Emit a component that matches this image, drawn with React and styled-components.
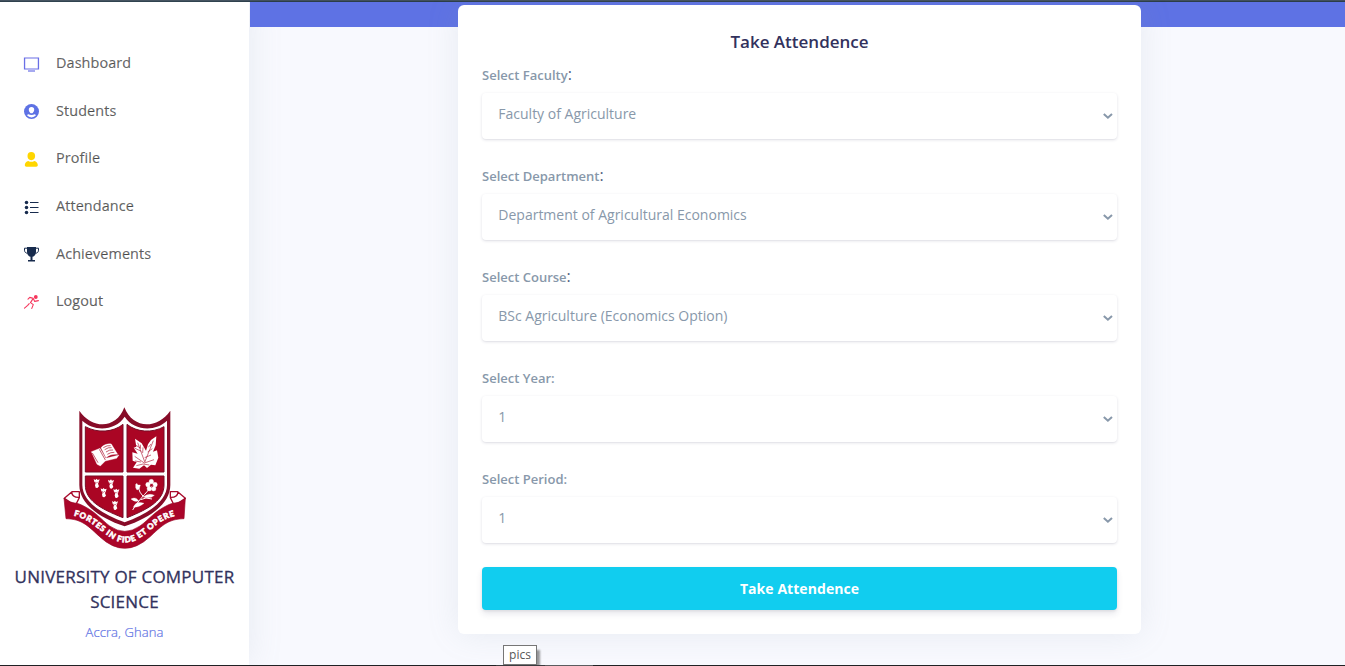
import React from "react";
import styled, { createGlobalStyle } from "styled-components";

const GlobalStyle = createGlobalStyle`
  * { box-sizing: border-box; }
  body {
    margin: 0;
    overflow: hidden;
    background: #f8f9fe;
    font-family: "Open Sans", "Liberation Sans", sans-serif;
    color: #525f7f;
  }
`;

const Page = styled.div`
  display: flex;
  flex-direction: column;
  height: 666px;
  overflow: hidden;
`;
const TopEdge = styled.div`
  flex: none;
  height: 2px;
  background: linear-gradient(#42505d 50%, #2b3d49 50%);
`;
const BottomEdge = styled.div`
  flex: none;
  height: 1px;
  position: relative;
  z-index: 3;
  background: linear-gradient(90deg, #202124 0 496px, #3a3b3e 496px 545px, #5b5c5f 545px 593px, #202124 593px);
`;
const Body = styled.div`
  flex: 1;
  min-height: 0;
  display: flex;
`;

const Sidebar = styled.aside`
  flex: none;
  width: 249px;
  background: #fff;
  box-shadow: 0 0 32px 0 rgba(136, 152, 170, 0.15);
  display: flex;
  flex-direction: column;
  align-items: center;
`;
const Nav = styled.nav`
  width: 100%;
  padding-top: 37px;
`;
const NavItem = styled.a`
  display: flex;
  align-items: center;
  height: 47.6px;
  padding-left: 23px;
  font-size: 14.4px;
  font-weight: 400;
  letter-spacing: 0.1px;
  -webkit-text-stroke: 0.2px rgba(0, 0, 0, 0.6);
  color: rgba(0, 0, 0, 0.6);
  svg { flex: none; margin: 3px 16px 0 0; }
`;
const Brand = styled.div`
  display: flex;
  flex-direction: column;
  align-items: center;
  margin-top: 70.4px;
  svg { display: block; margin-left: 1px; }
`;
const School = styled.h3`
  margin: 4px 0 0;
  width: 240px;
  text-align: center;
  font-size: 17px;
  line-height: 25px;
  font-weight: 400;
  letter-spacing: 0.22px;
  -webkit-text-stroke: 0.3px #32325d;
  color: #32325d;
`;
const Place = styled.div`
  margin-top: 8px;
  font-size: 13px;
  line-height: 20px;
  font-weight: 300;
  letter-spacing: 0.1px;
  -webkit-text-stroke: 0.2px #5e72e4;
  color: #5e72e4;
`;

const Main = styled.main`
  flex: 1;
  min-width: 0;
  margin-left: 1px;
  display: flex;
  flex-direction: column;
`;
const Band = styled.div`
  flex: none;
  height: 25px;
  background: #5e72e4;
`;
const Card = styled.form`
  flex: none;
  width: 683px;
  height: 629px;
  margin: -22px 0 0 208px;
  padding: 24px;
  border-radius: 6px;
  background: #fff;
  box-shadow: 0 0 32px 0 rgba(136, 152, 170, 0.15);
  position: relative;
`;
const Title = styled.h2`
  margin: 0;
  text-align: center;
  font-size: 17px;
  line-height: 26px;
  font-weight: 600;
  color: #32325d;
`;
const Field = styled.div`
  height: 101px;
  padding-top: 7px;
`;
const Label = styled.label`
  display: block;
  height: 24px;
  padding-top: ${(p) => (p.$large ? 0 : 1)}px;
  font-size: 13px;
  line-height: 24px;
  font-weight: 600;
  color: #8898aa;
`;
const Colon = styled.span`
  font-size: ${(p) => (p.$large ? "16px" : "13px")};
  font-weight: ${(p) => (p.$large ? 400 : 600)};
  color: ${(p) => (p.$large ? "#525f7f" : "#8898aa")};
`;
const Select = styled.div`
  display: flex;
  align-items: center;
  justify-content: space-between;
  height: 46px;
  margin-top: 7px;
  padding: 0 4px 6px 16.3px;
  border-radius: 4px;
  background: #fff;
  box-shadow: 0 1px 3px rgba(50, 50, 93, 0.15), 0 1px 0 rgba(0, 0, 0, 0.02);
  font-size: 14px;
  color: #8898aa;
  svg { margin-top: 6px; }
`;
const Submit = styled.button`
  display: block;
  width: 100%;
  height: 43px;
  margin-top: 7px;
  border: 0;
  border-radius: 4px;
  background: #11cdef;
  box-shadow: 0 4px 6px rgba(50, 50, 93, 0.11), 0 1px 3px rgba(0, 0, 0, 0.08);
  font: 700 14px "Open Sans", sans-serif;
  letter-spacing: 0.06px;
  color: #fff;
`;
const Tooltip = styled.div`
  position: absolute;
  z-index: 2;
  left: 503px;
  top: 645px;
  width: 34px;
  height: 20px;
  border: 1px solid #767676;
  background: #fff;
  box-shadow: 3px 5px 2px rgba(0, 0, 0, 0.4);
  font-size: 12px;
  line-height: 18px;
  text-align: center;
  color: #575757;
`;

const Icon = ({ children, color }) => (
  <svg width="17" height="17" viewBox="0 0 17 17" fill={color} stroke="none">
    {children}
  </svg>
);
const icons = {
  tv: (
    <Icon color="#6a6fe6">
      <path fillRule="evenodd" d="M.9 1.400h15.200v12.200H.9zM2.200 2.600v9.800h12.600V2.600z" />
      <path d="M5 14.400h7v1.200H5z" />
    </Icon>
  ),
  circle: (
    <Icon color="#5e72e4">
      <circle cx="8.5" cy="8.5" r="7.5" />
      <path fill="#fff" d="M8.5 4a2.7 2.7 0 0 1 2.7 2.8c0 1.2-.5 2.1-1.2 2.7v1c1.4.4 2.6 1 3 1.8a5.8 5.8 0 0 1-9 0c.4-.8 1.6-1.4 3-1.8v-1c-.7-.6-1.2-1.5-1.2-2.7A2.7 2.7 0 0 1 8.5 4z" />
      <path d="M5 10.300 7 9.800q1.500 1 3 0l2 .5-.3 1q-3.200 1.300-6.400 0z" />
    </Icon>
  ),
  person: (
    <Icon color="#ffd600">
      <ellipse cx="8.3" cy="5.1" rx="3.8" ry="4.1" />
      <path d="M5.300 9.900q3 1.700 6 0c2.100.3 3.500 2 3.500 4.200 0 1-.6 1.700-1.600 1.700H3.400c-1 0-1.600-.7-1.600-1.700 0-2.200 1.400-3.900 3.500-4.200z" />
    </Icon>
  ),
  list: (
    <Icon color="#172b4d">
      <circle cx="3.5" cy="3.4" r="1.75" />
      <circle cx="3.5" cy="8.4" r="1.75" />
      <circle cx="3.5" cy="13.4" r="1.75" />
      <path d="M7 2.9h8.500v1H7zM7 7.900h8.500v1H7zM7 12.900h8.500v1H7z" />
    </Icon>
  ),
  trophy: (
    <Icon color="#172b4d">
      <path d="M4 1h9v4.8c0 2.8-1.500 4.400-3.500 5V14H12v1.500H5V14h2.500v-3.200C5.500 10.200 4 8.600 4 5.800z" />
      <path fill="none" stroke="#172b4d" d="M4 2.200H1.500v2c0 1.800 1.200 2.900 3 3.100M13 2.200h2.500v2c0 1.800-1.200 2.900-3 3.100" />
    </Icon>
  ),
  run: (
    <Icon color="#f5365c">
      <circle cx="12.800" cy="3" r="1.900" />
      <g fill="none" stroke="#f5365c" strokeWidth="1.100" strokeLinecap="round" strokeLinejoin="round">
        <path d="M5 5.200 6.800 3.400l3.400 1-2.700 4.200 2.800 2-1.500 3.800M10.400 4.800l1.300 2.600 3.700-.8M6.200 9.700l-1.500 1.700-3.200 2.800" />
      </g>
    </Icon>
  ),
};

const navItems = [
  ["tv", "Dashboard"],
  ["circle", "Students"],
  ["person", "Profile"],
  ["list", "Attendance"],
  ["trophy", "Achievements"],
  ["run", "Logout"],
];
const fields = [
  ["Select Faculty", "Faculty of Agriculture", true],
  ["Select Department", "Department of Agricultural Economics", true],
  ["Select Course", "BSc Agriculture (Economics Option)", true],
  ["Select Year", "1", false],
  ["Select Period", "1", false],
];

const Chevron = () => (
  <svg width="11" height="8" viewBox="0 0 11 8" fill="none" stroke="#8898aa" strokeWidth="2">
    <path d="M1.800 1.900 5.900 5.700 10 1.900" />
  </svg>
);

const Flower = ({ x, y }) => (
  <g transform={`translate(${x} ${y})`} fill="#fff">
    <path d="M-9-12-4-9 0-13 3-9 9-11 6-2 4 2 7 10 2 15-3 14-5 7-3 1-7-4z" />
    <path d="M-5-3 0 0 4-4" stroke="#a90725" strokeWidth="1.500" fill="none" />
  </g>
);

const Crest = () => (
  <svg width="150" height="165" viewBox="0 0 450 495">
    <path fill="#870c28" d="M88 47C127 103 199 103 223 37 249 103 321 103 361 47V270C361 326 300 369 224 394 148 369 88 326 88 270z" />
    <path fill="#fff" d="M97 77C132 111 196 108 224 65 252 108 316 111 351 77V270C351 319 294 357 224 382 154 357 97 319 97 270z" />
    <g fill="#aa0524" stroke="#760c26" strokeWidth="3">
      <path d="M106 95C142 115 190 112 219 88V231H106z" />
      <path d="M231 88C260 112 307 115 342 95V231H231z" />
      <path d="M106 243H219V368C147 340 106 314 106 270z" />
      <path d="M231 243H342V270C342 314 301 340 231 368z" />
    </g>
    <g fill="#fff" stroke="#fff" strokeLinejoin="round">
      <path d="M124 170 150 160 167 190 207 180 200 190 166 198 151 213 141 208z" />
      <path d="M153 158C160 149 174 145 184 147L203 178C188 177 177 180 168 188z" />
    </g>
    <g fill="none" stroke="#a90725" strokeWidth="2">
      <path d="m148 163 18 32M160 158q12-8 22-6M164 164q11-8 21-6M168 171q11-8 21-6M172 178q11-7 21-6M127 174l17 29" />
    </g>
    <g fill="#fff">
      <path d="M255 131 275 145 288 167 294 148 303 135 319 124 317 151 309 170 321 166 325 188 316 211 303 209 291 219 282 211 268 221 249 218 260 202 248 197 247 172 263 176 251 158 259 155z" />
      <path fill="none" stroke="#a90725" strokeWidth="1.800" d="M263 143 284 200M310 137 284 202M254 184l29 20 29-10M253 159l21 10m-16-18 13 8m0-10 1 12m7-4-1 17m25-27-8 10m12 4-14 10m10 9-19 8M259 212l20-5 19 3M255 198l18 3" />
    </g>
    <Flower x={140} y={264} />
    <Flower x={183} y={266} />
    <Flower x={161} y={292} />
    <Flower x={199} y={294} />
    <Flower x={195} y={330} />
    <g fill="#fff" stroke="#fff">
      <path fill="none" strokeWidth="3" d="M248 345C266 315 286 297 305 274M280 305q-12-12-16-30M272 314q15-9 34-2" />
      <path d="M257 268q5-6 6 2l8 0-3 11-7 4-4-7zM280 306q14-13 33-5-13 12-33 5zM243 312q15-8 23 6-14 4-23-6zM250 337q8-21 32-12-15 13-32 12z" />
      <circle cx="304" cy="260" r="7" /><circle cx="315" cy="269" r="7" />
      <circle cx="311" cy="281" r="7" /><circle cx="298" cy="281" r="7" /><circle cx="294" cy="269" r="7" />
    </g>
    <circle cx="305" cy="272" r="4" fill="none" stroke="#a90725" strokeWidth="2" />
    <g fill="#fff" stroke="#a80b2c" strokeWidth="4" strokeLinejoin="round">
      <path d="M43 310 66 290 88 290 88 308 77 330 61 322zM65 290Q66 307 86 307" />
      <path d="M406 310 383 290 361 290 361 308 372 330 388 322zM384 290Q383 307 363 307" />
    </g>
    <path fill="#aa0529" stroke="#9a0929" strokeWidth="2" d="M42 309C58 327 75 320 95 330 137 350 154 374 179 393Q224 425 270 393C297 374 312 350 354 330 374 320 391 327 406 309L402 371C352 371 331 397 300 425Q224 495 149 425C118 397 97 371 48 371z" />
    <path id="motto" fill="none" d="M68 361C128 376 143 404 181 427Q224 456 267 430C307 407 320 375 382 361" />
    <text fill="#fff" stroke="#fff" strokeWidth="1.8" fontFamily="Lato, sans-serif" fontSize="24" fontWeight="900">
      <textPath href="#motto" startOffset="3" textLength="348" lengthAdjust="spacing">FORTES IN FIDE ET OPERE</textPath>
    </text>
  </svg>
);

export default function App() {
  return (
    <Page>
      <GlobalStyle />
      <TopEdge />
      <Body>
        <Sidebar>
          <Nav>
            {navItems.map(([icon, text]) => (
              <NavItem key={text}>{icons[icon]}{text}</NavItem>
            ))}
          </Nav>
          <Brand>
            <Crest />
            <School>UNIVERSITY OF COMPUTER SCIENCE</School>
            <Place>Accra, Ghana</Place>
          </Brand>
        </Sidebar>
        <Main>
          <Band />
          <Card>
            <Title>Take Attendence</Title>
            {fields.map(([label, value, large]) => (
              <Field key={label}>
                <Label $large={large}>{label}<Colon $large={large}>:</Colon></Label>
                <Select><span>{value}</span><Chevron /></Select>
              </Field>
            ))}
            <Submit type="button">Take Attendence</Submit>
          </Card>
        </Main>
      </Body>
      <Tooltip>pics</Tooltip>
      <BottomEdge />
    </Page>
  );
}
